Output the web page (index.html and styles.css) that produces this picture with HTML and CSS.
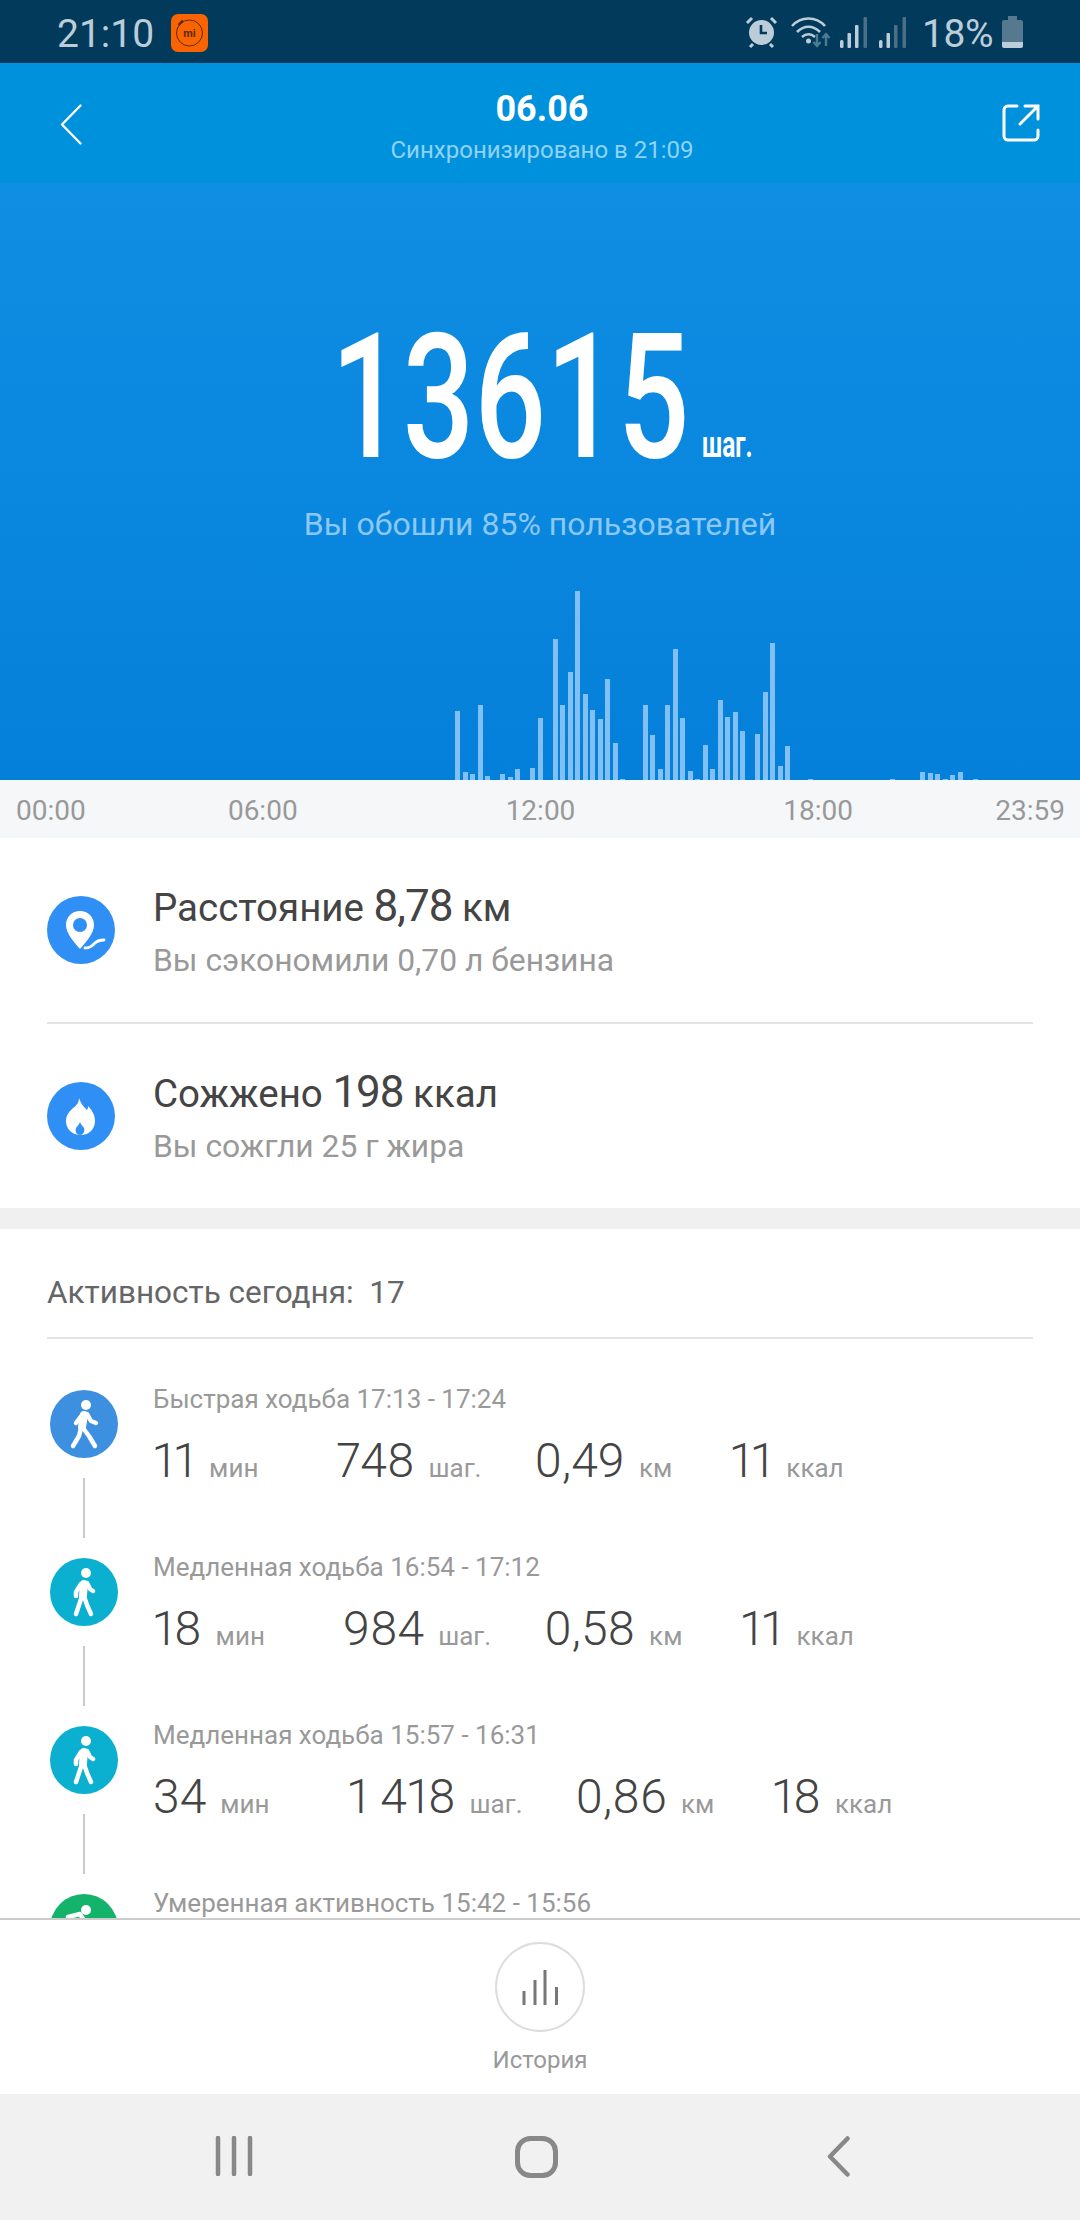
FILE: index.html
```html
<!DOCTYPE html>
<html lang="ru">
<head>
<meta charset="utf-8">
<title>Шаги</title>
<link rel="stylesheet" href="styles.css">
</head>
<body>
<div class="phone">
  <div class="status">
    <span class="clock">21:10</span>
    <svg class="app-ic" viewBox="0 0 37 38"><rect width="37" height="38" rx="7" fill="#fa6400"/><circle cx="18.500" cy="19" r="13" fill="none" stroke="#5a2a10" stroke-width="1"/><path d="M7.500 11 L12 6.500" stroke="#5a2a10" stroke-width="2.400"/><text x="18.500" y="23" text-anchor="middle" class="mi">mi</text></svg>
    <span class="status-fill"></span>
    <svg class="st-alarm" viewBox="0 0 33 32"><circle cx="16.500" cy="16.500" r="12.500" fill="#bccdd9"/><path d="M16 9v8h6" fill="none" stroke="#023a5b" stroke-width="2.600"/><path d="M2 7 7 2M31 7 26 2M5 31l3-3M28 31l-3-3" stroke="#bccdd9" stroke-width="3"/></svg>
    <svg class="st-wifi" viewBox="0 0 42 32"><path d="M2 10C11 0 26 0 35 10M7 16c7-7 16-7 23 0M12 21c4-3.500 9-3.500 13 0" fill="none" stroke="#bccdd9" stroke-width="2.600"/><circle cx="18.500" cy="25" r="2.500" fill="#bccdd9"/><path d="M27 18v12M23.500 26l3.500 4 3.500-4M36 30V18M32.500 22l3.500-4 3.500 4" fill="none" stroke="#4f7a94" stroke-width="2.400"/></svg>
    <svg class="st-sig" viewBox="0 0 28 31"><rect x="0" y="23" width="3.500" height="8" rx="1.500" fill="#bccdd9"/><rect x="7.500" y="16" width="3.500" height="15" rx="1" fill="#bccdd9"/><rect x="15" y="8" width="3.500" height="23" rx="1" fill="#bccdd9"/><rect x="23.500" y="0" width="3.500" height="31" rx="1" fill="#4a7087"/></svg>
    <svg class="st-sig st-sig2" viewBox="0 0 28 31"><rect x="0" y="23" width="3.500" height="8" rx="1.500" fill="#bccdd9"/><rect x="7.500" y="16" width="3.500" height="15" rx="1" fill="#bccdd9"/><rect x="15" y="8" width="3.500" height="23" rx="1" fill="#4a7087"/><rect x="23.500" y="0" width="3.500" height="31" rx="1" fill="#4a7087"/></svg>
    <span class="pct">18%</span>
    <svg class="st-bat" viewBox="0 0 21 32"><path d="M6 0h9v4h4a2 2 0 0 1 2 2v20H0V6a2 2 0 0 1 2-2h4z" fill="#57798f"/><path d="M0 26h21v4a2 2 0 0 1-2 2H2a2 2 0 0 1-2-2z" fill="#bccdd9"/></svg>
  </div>

  <header class="head">
    <svg class="back" viewBox="0 0 22 41"><path d="M20.500 1.500 2 20.500l18.500 19" fill="none" stroke="#fff" stroke-width="2.400" stroke-linecap="round" stroke-linejoin="round"/></svg>
    <div class="head-mid">
      <div class="date">06.06</div>
      <div class="synced">Синхронизировано в 21:09</div>
    </div>
    <svg class="share" viewBox="0 0 38 38"><path d="M15 2H6a4 4 0 0 0-4 4v26a4 4 0 0 0 4 4h26a4 4 0 0 0 4-4v-6" fill="none" stroke="#fff" stroke-width="3" stroke-linecap="round"/><path d="M23 2h13v13M35 3 18 20" fill="none" stroke="#fff" stroke-width="3" stroke-linecap="round"/></svg>
  </header>

  <section class="hero">
    <div class="steps">
      <span class="steps-num"><span class="steps-num-in">13615</span></span>
      <span class="steps-unit"><span class="steps-unit-in">шаг.</span></span>
    </div>
    <div class="beat">Вы обошли 85% пользователей</div>
    <div class="chart">
      <i style="height:69px"></i><i style="height:8px"></i><i style="height:6px"></i><i style="height:75px"></i><i style="height:4px"></i><i style="height:0"></i><i style="height:6px"></i><i style="height:3px"></i><i style="height:11px"></i><i style="height:0"></i>
      <i style="height:12px"></i><i style="height:62px"></i><i style="height:0"></i><i style="height:141px"></i><i style="height:75px"></i><i style="height:108px"></i><i style="height:189px"></i><i style="height:86px"></i><i style="height:70px"></i><i style="height:61px"></i>
      <i style="height:101px"></i><i style="height:37px"></i><i style="height:1px"></i><i style="height:0"></i><i style="height:0"></i><i style="height:75px"></i><i style="height:45px"></i><i style="height:11px"></i><i style="height:75px"></i><i style="height:131px"></i>
      <i style="height:62px"></i><i style="height:9px"></i><i style="height:1px"></i><i style="height:35px"></i><i style="height:11px"></i><i style="height:80px"></i><i style="height:63px"></i><i style="height:68px"></i><i style="height:49px"></i><i style="height:0"></i>
      <i style="height:46px"></i><i style="height:88px"></i><i style="height:137px"></i><i style="height:14px"></i><i style="height:34px"></i><i style="height:0"></i><i style="height:0"></i><i style="height:1px"></i><i style="height:0"></i><i style="height:0"></i>
      <i style="height:0"></i><i style="height:0"></i><i style="height:0"></i><i style="height:0"></i><i style="height:0"></i><i style="height:0"></i><i style="height:0"></i><i style="height:0"></i><i style="height:1px"></i><i style="height:0"></i>
      <i style="height:0"></i><i style="height:0"></i><i style="height:8px"></i><i style="height:7px"></i><i style="height:6px"></i><i style="height:1px"></i><i style="height:5px"></i><i style="height:8px"></i><i style="height:0"></i><i style="height:1px"></i>
    </div>
  </section>

  <div class="axis">
    <span>00:00</span>
    <span class="axis-mid"><span>06:00</span><span>12:00</span><span>18:00</span></span>
    <span>23:59</span>
  </div>

  <section class="summary">
    <div class="sum-row sum-line">
      <svg class="sum-ic" viewBox="0 0 68 68"><circle cx="34" cy="34" r="34" fill="#2f8ff5"/><path fill-rule="evenodd" d="M33 15c8 0 14 6 14 14 0 8-7 16-14 24-7-8-14-16-14-24 0-8 6-14 14-14zm0 7a7 7 0 1 0 0 14 7 7 0 0 0 0-14z" fill="#fff"/><path d="M38 52c5 0 7-2 10-5 2-2 5-3 9-3" fill="none" stroke="#fff" stroke-width="2.800" stroke-linecap="round"/></svg>
      <div>
        <div class="sum-title">Расстояние <b>8,78</b> км</div>
        <div class="sum-sub">Вы сэкономили 0,70 л бензина</div>
      </div>
    </div>
    <div class="sum-row">
      <svg class="sum-ic" viewBox="0 0 68 68"><circle cx="34" cy="34" r="34" fill="#2f8ff5"/><path d="M32 16c2 6 5 9 8 12 1-1 1-3 1-4 5 5 7 10 7 15 0 8-6 14-14 14-9 0-15-6-15-14 0-5 2-8 6-12 4-3 7-6 7-11z" fill="#fff"/><path d="M33 40c1 3 3 4 4 6 1 2 0 7-4 7-4 0-5-4-4-7 1-2 3-3 4-6z" fill="#2f8ff5"/></svg>
      <div>
        <div class="sum-title">Сожжено <b>198</b> ккал</div>
        <div class="sum-sub">Вы сожгли 25 г жира</div>
      </div>
    </div>
  </section>

  <div class="gap"></div>

  <section class="activity">
    <div class="act-head"><div class="act-title">Активность сегодня:&nbsp; 17</div></div>
    <div class="act-list">
      <div class="act-row">
        <div class="rail">
          <svg class="act-ic" viewBox="0 0 68 68"><circle cx="34" cy="34" r="34" fill="#3d8fe0"/><circle cx="36" cy="15" r="5" fill="#fff"/><path d="M34 25 32 37" stroke="#fff" stroke-width="8" stroke-linecap="round"/><path d="M31 38 29 46 23 56M33 38 39 46 45 56M37 24 41 31 46 33M32 25 26 33" fill="none" stroke="#fff" stroke-width="4.500" stroke-linecap="round" stroke-linejoin="round"/></svg>
          <span class="link"></span>
        </div>
        <div class="act-body">
          <div class="act-name">Быстрая ходьба 17:13 - 17:24</div>
          <div class="stats"><span class="s s-time"><b>11</b>мин</span><span class="s s-step"><b>748</b>шаг.</span><span class="s s-km"><b>0,49</b>км</span><span class="s"><b>11</b>ккал</span></div>
        </div>
      </div>
      <div class="act-row">
        <div class="rail">
          <svg class="act-ic" viewBox="0 0 68 68"><circle cx="34" cy="34" r="34" fill="#0bb0d0"/><circle cx="36" cy="15" r="5" fill="#fff"/><path d="M34 26 33 37" stroke="#fff" stroke-width="8" stroke-linecap="round"/><path d="M32 38 29 47 26 56M34 38 37 47 41 56M37 25 40 31 43 33M31 26 26 34 26 38" fill="none" stroke="#fff" stroke-width="4.500" stroke-linecap="round" stroke-linejoin="round"/></svg>
          <span class="link"></span>
        </div>
        <div class="act-body">
          <div class="act-name">Медленная ходьба 16:54 - 17:12</div>
          <div class="stats"><span class="s s-time"><b>18</b>мин</span><span class="s s-step"><b>984</b>шаг.</span><span class="s s-km"><b>0,58</b>км</span><span class="s"><b>11</b>ккал</span></div>
        </div>
      </div>
      <div class="act-row">
        <div class="rail">
          <svg class="act-ic" viewBox="0 0 68 68"><circle cx="34" cy="34" r="34" fill="#0bb0d0"/><circle cx="36" cy="15" r="5" fill="#fff"/><path d="M34 26 33 37" stroke="#fff" stroke-width="8" stroke-linecap="round"/><path d="M32 38 29 47 26 56M34 38 37 47 41 56M37 25 40 31 43 33M31 26 26 34 26 38" fill="none" stroke="#fff" stroke-width="4.500" stroke-linecap="round" stroke-linejoin="round"/></svg>
          <span class="link"></span>
        </div>
        <div class="act-body">
          <div class="act-name">Медленная ходьба 15:57 - 16:31</div>
          <div class="stats"><span class="s s-time"><b>34</b>мин</span><span class="s s-step"><b>1 418</b>шаг.</span><span class="s s-km"><b>0,86</b>км</span><span class="s"><b>18</b>ккал</span></div>
        </div>
      </div>
      <div class="act-row">
        <div class="rail">
          <svg class="act-ic" viewBox="0 0 68 68"><circle cx="34" cy="34" r="34" fill="#14b36b"/><circle cx="36" cy="16" r="5" fill="#fff"/><path d="M30 20 18 23M30 20 36 30" fill="none" stroke="#fff" stroke-width="4.500" stroke-linecap="round"/></svg>
        </div>
        <div class="act-body">
          <div class="act-name">Умеренная активность 15:42 - 15:56</div>
        </div>
      </div>
    </div>
  </section>

  <nav class="tabbar">
    <span class="hist-ic">
      <svg viewBox="0 0 36 36" class="hist-svg"><path d="M2 36V22M13 36V11M23 36V1M34.500 36V18" fill="none" stroke="#777" stroke-width="3"/></svg>
    </span>
    <span class="hist-label">История</span>
  </nav>

  <div class="sysnav">
    <svg class="sys-recent" viewBox="0 0 38 40"><path d="M3 2v36M19 2v36M35 2v36" fill="none" stroke="#888" stroke-width="4.500" stroke-linecap="round"/></svg>
    <svg class="sys-home" viewBox="0 0 43 42"><rect x="2.500" y="2.500" width="38" height="37" rx="13" fill="none" stroke="#888" stroke-width="5"/></svg>
    <svg class="sys-back" viewBox="0 0 23 41"><path d="M20.500 2.500 3 20.500l17.500 18" fill="none" stroke="#888" stroke-width="4.500" stroke-linecap="round" stroke-linejoin="round"/></svg>
  </div>
</div>
</body>
</html>
```
FILE: styles.css
```css
* { box-sizing: border-box; }
html, body { margin: 0; padding: 0; }
body { width: 1080px; height: 2220px; overflow: hidden; background: #fff; font-family: Roboto, "Noto Sans", sans-serif; }
.phone { width: 1080px; height: 2220px; display: flex; flex-direction: column; }

.status { height: 63px; flex: none; background: #023a5b; display: flex; align-items: flex-start; padding-left: 57px; color: #bccdd9; }
.clock { font-size: 39px; line-height: 46px; margin-top: 11px; width: 114px; }
.app-ic { width: 37px; height: 38px; margin-top: 14px; }
.mi { font: 700 11px Roboto, sans-serif; fill: #5a2a10; }
.status-fill { flex: 1; }
.st-alarm { width: 33px; height: 32px; margin-top: 16px; margin-right: 12px; }
.st-wifi { width: 42px; height: 32px; margin-top: 16px; margin-right: 8px; }
.st-sig { width: 28px; height: 31px; margin-top: 17px; margin-right: 11px; }
.st-sig2 { margin-right: 15px; }
.pct { font-size: 39px; line-height: 46px; margin-top: 11px; margin-right: 9px; letter-spacing: -0.5px; }
.st-bat { width: 21px; height: 32px; margin-top: 16px; margin-right: 57px; }

.head { height: 120px; flex: none; background: #0091dc; display: flex; align-items: flex-start; justify-content: space-between; padding: 41px 40px 0 60px; }
.back { width: 22px; height: 41px; }
.share { width: 38px; height: 38px; }
.head-mid { text-align: center; margin-top: -16px; }
.date { font-size: 36px; font-weight: 700; line-height: 42px; color: #fff; }
.synced { font-size: 24px; line-height: 30px; color: #8fd3f8; margin-top: 5px; }

.hero { height: 597px; flex: none; background: linear-gradient(#0f8ee3, #0580da); display: flex; flex-direction: column; align-items: center; padding-top: 128px; color: #fff; }
.steps { display: flex; align-items: baseline; height: 174px; }
.steps-num { width: 352px; font-size: 174px; line-height: 174px; font-weight: 500; white-space: nowrap; display: block; }
.steps-num-in { display: inline-block; transform: scaleX(0.725); transform-origin: left center; }
.steps-unit { width: 48px; margin-left: 19px; font-size: 37px; font-weight: 700; white-space: nowrap; }
.steps-unit-in { display: inline-block; transform: scaleX(0.66); transform-origin: left center; }
.beat { font-size: 32px; line-height: 40px; color: #8cc8f5; margin-top: 19px; }
.chart { margin-top: auto; width: 100%; display: flex; align-items: flex-end; gap: 2.5px; padding-left: 455px; }
.chart i { display: block; width: 5px; flex: none; background: #80c0f4; }

.axis { height: 58px; flex: none; background: #f6f7f9; display: flex; justify-content: space-between; align-items: center; padding: 2px 15px 0 16px; font-size: 28px; color: #999; }
.axis-mid { display: flex; gap: 208px; }

.summary { height: 370px; flex: none; padding: 0 47px; display: flex; flex-direction: column; }
.sum-row { flex: 1; display: flex; align-items: center; gap: 38px; }
.sum-line { border-bottom: 2px solid #e4e4e4; }
.sum-ic { width: 68px; height: 68px; flex: none; }
.sum-title { font-size: 38.5px; line-height: 46px; color: #444; }
.sum-title b { font-size: 44px; font-weight: 400; letter-spacing: -1px; }
.sum-sub { font-size: 31.8px; line-height: 36px; color: #999; margin-top: 11px; }

.gap { height: 21px; flex: none; background: #f0f0f0; }

.activity { flex: 1; min-height: 0; overflow: hidden; display: flex; flex-direction: column; }
.act-head { margin: 0 47px; height: 110px; flex: none; border-bottom: 2px solid #e4e4e4; display: flex; align-items: center; padding-top: 18px; }
.act-title { font-size: 31.5px; color: #666; }
.act-list { padding-top: 45px; }
.act-row { height: 168px; display: flex; padding-left: 50px; gap: 35px; }
.rail { width: 68px; flex: none; display: flex; flex-direction: column; align-items: center; padding-top: 6px; }
.act-ic { width: 68px; height: 68px; flex: none; }
.link { width: 2px; height: 60px; margin-top: 20px; background: #ccc; }
.act-name { font-size: 26px; line-height: 30px; color: #999; }
.stats { display: flex; margin-top: 19px; align-items: baseline; font-size: 26px; color: #999; line-height: 56px; }
.stats b { font-size: 48px; font-weight: 300; color: #444; margin-right: 14px; font-variant-numeric: proportional-nums; }
.s-time { margin-right: 78px; }
.s-step { margin-right: 53px; }
.s-km { margin-right: 58px; }

.tabbar { height: 176px; flex: none; border-top: 2px solid #ccc; display: flex; flex-direction: column; align-items: center; padding-top: 22px; background: #fff; }
.hist-ic { width: 90px; height: 90px; border: 2px solid #ddd; border-radius: 50%; display: flex; align-items: center; justify-content: center; }
.hist-svg { width: 36px; height: 36px; }
.hist-label { font-size: 24px; line-height: 30px; color: #999; margin-top: 13px; }

.sysnav { height: 126px; flex: none; background: #f1f1f1; display: flex; align-items: flex-start; padding: 42px 0 0 215px; }
.sys-recent { width: 38px; height: 40px; margin-right: 262px; }
.sys-home { width: 43px; height: 42px; margin-right: 269px; }
.sys-back { width: 23px; height: 41px; }
```
